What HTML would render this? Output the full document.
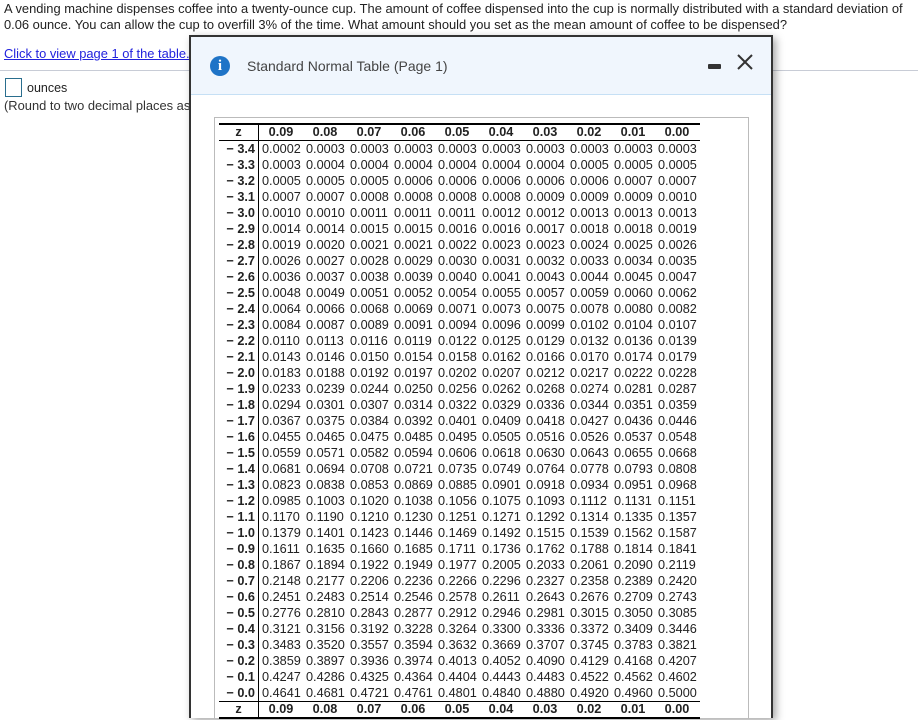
<!DOCTYPE html>
<html><head><meta charset="utf-8"><style>
html,body{height:720px;overflow:hidden}
body{margin:0;width:918px;background:#fff;font-family:"Liberation Sans",Arial,sans-serif;color:#222;position:relative}
.q{position:absolute;left:4px;top:1px;font-size:12.9px;line-height:16px;width:912px}
.lnk{position:absolute;left:4px;top:46px;font-size:12.9px;color:#2222dd;text-decoration:underline}
.hr{position:absolute;left:0;top:70px;width:918px;height:1px;background:#c8ccd6}
.box{position:absolute;left:5px;top:78px;width:15px;height:17px;border:1px solid #2a6e8e}
.oz{position:absolute;left:27px;top:81px;font-size:12.5px}
.rd{position:absolute;left:4px;top:98px;font-size:12.9px;color:#333}
.modal{position:absolute;left:189px;top:35px;width:580px;height:681px;border:2px solid #333;border-bottom:none;background:#fff;box-shadow:3px 3px 8px rgba(0,0,0,.35)}
.hd{position:absolute;left:0;top:0;width:580px;height:57px;background:#f0f6fd;border-bottom:1px solid #c6e0f5}
.ic{position:absolute;left:19px;top:19px;width:20px;height:20px;border-radius:50%;background:#1f74c7;color:#fff;font:bold 15px "Liberation Serif",serif;text-align:center;line-height:20px}
.tt{position:absolute;left:56px;top:21px;font-size:14px;color:#444}
.mn{position:absolute;left:517px;top:27px;width:13px;height:5px;background:#333;border-radius:1px}
.inner{position:absolute;left:23px;top:80px;width:533px;height:601px;border:1px solid #bbb;border-bottom:none}
.tb{position:absolute;left:28px;top:86px;width:481px;font-size:12.7px}
.r{height:16px;line-height:16px;display:flex;white-space:nowrap;overflow:hidden}
.r span{width:44px;padding-left:3px;box-sizing:border-box}
.r span:first-child{width:40px;text-align:right;font-weight:bold;padding:0 3px 0 0;border-right:1px solid #000}
.h{font-weight:bold;border-top:2px solid #000;border-bottom:1px solid #000;height:15px;line-height:15px}
.h span{text-align:center;padding-left:0!important}
.h span:first-child{text-align:center;padding:0!important}
.b{border-top:1px solid #000;border-bottom:2px solid #000;height:15px;line-height:15px}
</style></head><body>
<div class="q">A vending machine dispenses coffee into a twenty-ounce cup. The amount of coffee dispensed into the cup is normally distributed with a standard deviation of 0.06 ounce. You can allow the cup to overfill 3% of the time. What amount should you set as the mean amount of coffee to be dispensed?</div>
<div class="lnk">Click to view page 1 of the table.</div>
<div class="hr"></div>
<div class="box"></div><div class="oz">ounces</div>
<div class="rd">(Round to two decimal places as needed.)</div>
<div class="modal">
<div class="hd"><div class="ic">i</div><div class="tt">Standard Normal Table (Page 1)</div><div class="mn"></div>
<svg style="position:absolute;left:546px;top:17px" width="16" height="16"><path d="M1 1L15 15M15 1L1 15" stroke="#333" stroke-width="2"/></svg></div>
<div class="inner"></div>
<div class="tb">
<div class="r h"><span>z</span><span>0.09</span><span>0.08</span><span>0.07</span><span>0.06</span><span>0.05</span><span>0.04</span><span>0.03</span><span>0.02</span><span>0.01</span><span>0.00</span></div>
<div class="r"><span>− 3.4</span><span>0.0002</span><span>0.0003</span><span>0.0003</span><span>0.0003</span><span>0.0003</span><span>0.0003</span><span>0.0003</span><span>0.0003</span><span>0.0003</span><span>0.0003</span></div>
<div class="r"><span>− 3.3</span><span>0.0003</span><span>0.0004</span><span>0.0004</span><span>0.0004</span><span>0.0004</span><span>0.0004</span><span>0.0004</span><span>0.0005</span><span>0.0005</span><span>0.0005</span></div>
<div class="r"><span>− 3.2</span><span>0.0005</span><span>0.0005</span><span>0.0005</span><span>0.0006</span><span>0.0006</span><span>0.0006</span><span>0.0006</span><span>0.0006</span><span>0.0007</span><span>0.0007</span></div>
<div class="r"><span>− 3.1</span><span>0.0007</span><span>0.0007</span><span>0.0008</span><span>0.0008</span><span>0.0008</span><span>0.0008</span><span>0.0009</span><span>0.0009</span><span>0.0009</span><span>0.0010</span></div>
<div class="r"><span>− 3.0</span><span>0.0010</span><span>0.0010</span><span>0.0011</span><span>0.0011</span><span>0.0011</span><span>0.0012</span><span>0.0012</span><span>0.0013</span><span>0.0013</span><span>0.0013</span></div>
<div class="r"><span>− 2.9</span><span>0.0014</span><span>0.0014</span><span>0.0015</span><span>0.0015</span><span>0.0016</span><span>0.0016</span><span>0.0017</span><span>0.0018</span><span>0.0018</span><span>0.0019</span></div>
<div class="r"><span>− 2.8</span><span>0.0019</span><span>0.0020</span><span>0.0021</span><span>0.0021</span><span>0.0022</span><span>0.0023</span><span>0.0023</span><span>0.0024</span><span>0.0025</span><span>0.0026</span></div>
<div class="r"><span>− 2.7</span><span>0.0026</span><span>0.0027</span><span>0.0028</span><span>0.0029</span><span>0.0030</span><span>0.0031</span><span>0.0032</span><span>0.0033</span><span>0.0034</span><span>0.0035</span></div>
<div class="r"><span>− 2.6</span><span>0.0036</span><span>0.0037</span><span>0.0038</span><span>0.0039</span><span>0.0040</span><span>0.0041</span><span>0.0043</span><span>0.0044</span><span>0.0045</span><span>0.0047</span></div>
<div class="r"><span>− 2.5</span><span>0.0048</span><span>0.0049</span><span>0.0051</span><span>0.0052</span><span>0.0054</span><span>0.0055</span><span>0.0057</span><span>0.0059</span><span>0.0060</span><span>0.0062</span></div>
<div class="r"><span>− 2.4</span><span>0.0064</span><span>0.0066</span><span>0.0068</span><span>0.0069</span><span>0.0071</span><span>0.0073</span><span>0.0075</span><span>0.0078</span><span>0.0080</span><span>0.0082</span></div>
<div class="r"><span>− 2.3</span><span>0.0084</span><span>0.0087</span><span>0.0089</span><span>0.0091</span><span>0.0094</span><span>0.0096</span><span>0.0099</span><span>0.0102</span><span>0.0104</span><span>0.0107</span></div>
<div class="r"><span>− 2.2</span><span>0.0110</span><span>0.0113</span><span>0.0116</span><span>0.0119</span><span>0.0122</span><span>0.0125</span><span>0.0129</span><span>0.0132</span><span>0.0136</span><span>0.0139</span></div>
<div class="r"><span>− 2.1</span><span>0.0143</span><span>0.0146</span><span>0.0150</span><span>0.0154</span><span>0.0158</span><span>0.0162</span><span>0.0166</span><span>0.0170</span><span>0.0174</span><span>0.0179</span></div>
<div class="r"><span>− 2.0</span><span>0.0183</span><span>0.0188</span><span>0.0192</span><span>0.0197</span><span>0.0202</span><span>0.0207</span><span>0.0212</span><span>0.0217</span><span>0.0222</span><span>0.0228</span></div>
<div class="r"><span>− 1.9</span><span>0.0233</span><span>0.0239</span><span>0.0244</span><span>0.0250</span><span>0.0256</span><span>0.0262</span><span>0.0268</span><span>0.0274</span><span>0.0281</span><span>0.0287</span></div>
<div class="r"><span>− 1.8</span><span>0.0294</span><span>0.0301</span><span>0.0307</span><span>0.0314</span><span>0.0322</span><span>0.0329</span><span>0.0336</span><span>0.0344</span><span>0.0351</span><span>0.0359</span></div>
<div class="r"><span>− 1.7</span><span>0.0367</span><span>0.0375</span><span>0.0384</span><span>0.0392</span><span>0.0401</span><span>0.0409</span><span>0.0418</span><span>0.0427</span><span>0.0436</span><span>0.0446</span></div>
<div class="r"><span>− 1.6</span><span>0.0455</span><span>0.0465</span><span>0.0475</span><span>0.0485</span><span>0.0495</span><span>0.0505</span><span>0.0516</span><span>0.0526</span><span>0.0537</span><span>0.0548</span></div>
<div class="r"><span>− 1.5</span><span>0.0559</span><span>0.0571</span><span>0.0582</span><span>0.0594</span><span>0.0606</span><span>0.0618</span><span>0.0630</span><span>0.0643</span><span>0.0655</span><span>0.0668</span></div>
<div class="r"><span>− 1.4</span><span>0.0681</span><span>0.0694</span><span>0.0708</span><span>0.0721</span><span>0.0735</span><span>0.0749</span><span>0.0764</span><span>0.0778</span><span>0.0793</span><span>0.0808</span></div>
<div class="r"><span>− 1.3</span><span>0.0823</span><span>0.0838</span><span>0.0853</span><span>0.0869</span><span>0.0885</span><span>0.0901</span><span>0.0918</span><span>0.0934</span><span>0.0951</span><span>0.0968</span></div>
<div class="r"><span>− 1.2</span><span>0.0985</span><span>0.1003</span><span>0.1020</span><span>0.1038</span><span>0.1056</span><span>0.1075</span><span>0.1093</span><span>0.1112</span><span>0.1131</span><span>0.1151</span></div>
<div class="r"><span>− 1.1</span><span>0.1170</span><span>0.1190</span><span>0.1210</span><span>0.1230</span><span>0.1251</span><span>0.1271</span><span>0.1292</span><span>0.1314</span><span>0.1335</span><span>0.1357</span></div>
<div class="r"><span>− 1.0</span><span>0.1379</span><span>0.1401</span><span>0.1423</span><span>0.1446</span><span>0.1469</span><span>0.1492</span><span>0.1515</span><span>0.1539</span><span>0.1562</span><span>0.1587</span></div>
<div class="r"><span>− 0.9</span><span>0.1611</span><span>0.1635</span><span>0.1660</span><span>0.1685</span><span>0.1711</span><span>0.1736</span><span>0.1762</span><span>0.1788</span><span>0.1814</span><span>0.1841</span></div>
<div class="r"><span>− 0.8</span><span>0.1867</span><span>0.1894</span><span>0.1922</span><span>0.1949</span><span>0.1977</span><span>0.2005</span><span>0.2033</span><span>0.2061</span><span>0.2090</span><span>0.2119</span></div>
<div class="r"><span>− 0.7</span><span>0.2148</span><span>0.2177</span><span>0.2206</span><span>0.2236</span><span>0.2266</span><span>0.2296</span><span>0.2327</span><span>0.2358</span><span>0.2389</span><span>0.2420</span></div>
<div class="r"><span>− 0.6</span><span>0.2451</span><span>0.2483</span><span>0.2514</span><span>0.2546</span><span>0.2578</span><span>0.2611</span><span>0.2643</span><span>0.2676</span><span>0.2709</span><span>0.2743</span></div>
<div class="r"><span>− 0.5</span><span>0.2776</span><span>0.2810</span><span>0.2843</span><span>0.2877</span><span>0.2912</span><span>0.2946</span><span>0.2981</span><span>0.3015</span><span>0.3050</span><span>0.3085</span></div>
<div class="r"><span>− 0.4</span><span>0.3121</span><span>0.3156</span><span>0.3192</span><span>0.3228</span><span>0.3264</span><span>0.3300</span><span>0.3336</span><span>0.3372</span><span>0.3409</span><span>0.3446</span></div>
<div class="r"><span>− 0.3</span><span>0.3483</span><span>0.3520</span><span>0.3557</span><span>0.3594</span><span>0.3632</span><span>0.3669</span><span>0.3707</span><span>0.3745</span><span>0.3783</span><span>0.3821</span></div>
<div class="r"><span>− 0.2</span><span>0.3859</span><span>0.3897</span><span>0.3936</span><span>0.3974</span><span>0.4013</span><span>0.4052</span><span>0.4090</span><span>0.4129</span><span>0.4168</span><span>0.4207</span></div>
<div class="r"><span>− 0.1</span><span>0.4247</span><span>0.4286</span><span>0.4325</span><span>0.4364</span><span>0.4404</span><span>0.4443</span><span>0.4483</span><span>0.4522</span><span>0.4562</span><span>0.4602</span></div>
<div class="r"><span>− 0.0</span><span>0.4641</span><span>0.4681</span><span>0.4721</span><span>0.4761</span><span>0.4801</span><span>0.4840</span><span>0.4880</span><span>0.4920</span><span>0.4960</span><span>0.5000</span></div>
<div class="r h b"><span>z</span><span>0.09</span><span>0.08</span><span>0.07</span><span>0.06</span><span>0.05</span><span>0.04</span><span>0.03</span><span>0.02</span><span>0.01</span><span>0.00</span></div>
</div>
</div>
</body></html>
